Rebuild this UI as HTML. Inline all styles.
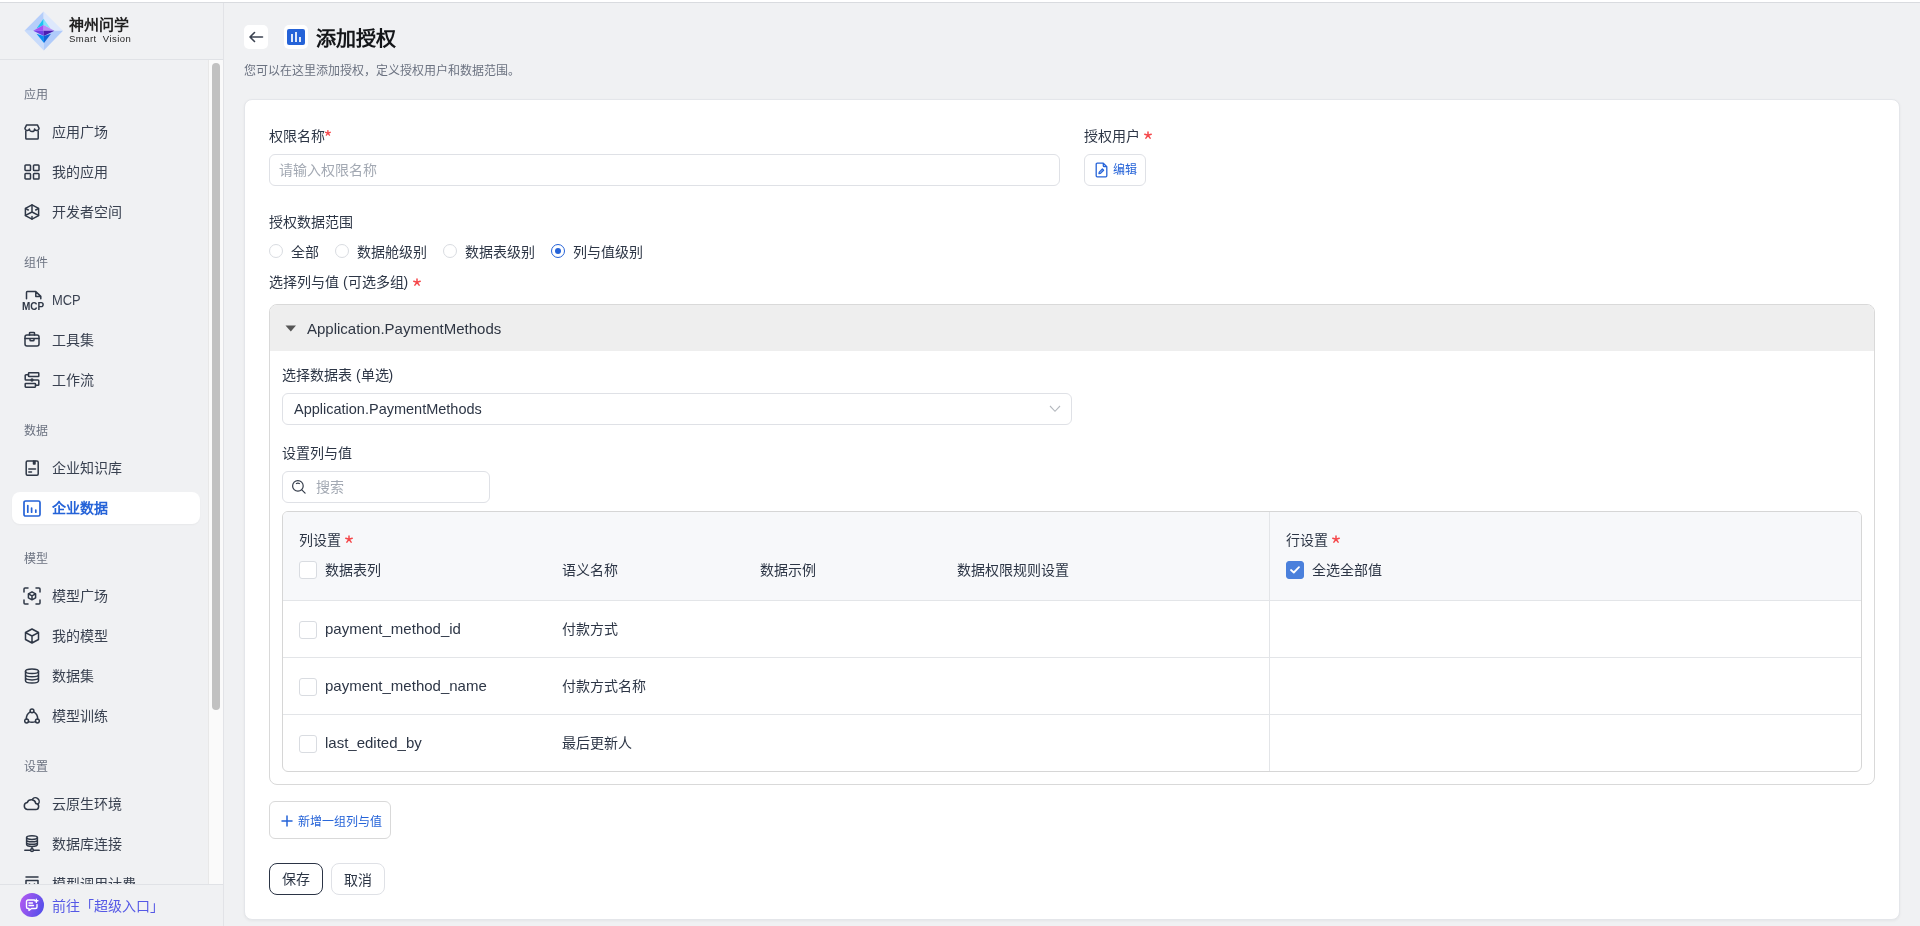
<!DOCTYPE html>
<html lang="zh-CN"><head><meta charset="utf-8">
<style>
*{box-sizing:border-box;margin:0;padding:0}
html,body{width:1920px;height:926px;overflow:hidden}
#root{position:absolute;left:0;top:0;width:1920px;height:926px;overflow:hidden;will-change:transform;background:#f0f1f3}
body{font-family:"Liberation Sans",sans-serif;background:#f0f1f3;color:#2d3646;position:relative;font-size:14px}
.topline{position:absolute;left:0;top:0;width:1920px;height:3px;background:#fff;border-bottom:1px solid #d9dbdf;z-index:5}
.sidebar{position:absolute;left:0;top:0;width:224px;height:926px;background:#f0f1f3;border-right:1px solid #e2e3e7}
.logo{position:absolute;left:0;top:0;width:223px;height:60px;border-bottom:1px solid #e0e2e6}
.gem{position:absolute;left:24px;top:11px}
.brand{position:absolute;left:69px;top:16px;font-size:15px;font-weight:bold;color:#1f1f1f;line-height:18px;letter-spacing:0px}
.brand2{position:absolute;left:69px;top:34px;font-size:9.5px;color:#1f1f1f;line-height:10px;letter-spacing:0.45px}
.track{position:absolute;left:208px;top:60px;width:15px;height:825px;background:#fafafa;border-left:1px solid #e8e8e8}
.thumb{position:absolute;left:3px;top:3px;width:8px;height:647px;background:#c1c1c1;border-radius:4px}
.sec{position:absolute;left:24px;font-size:12px;color:#6b7280;line-height:20px}
.item{position:absolute;left:12px;width:188px;height:32px;border-radius:8px;font-size:14px;color:#394150;line-height:32px}
.item .ic{position:absolute;left:12px;top:8px;width:16px;height:16px}
.item .ic svg{position:absolute;left:0;top:0}
.item .ic-mcp svg{left:-3px;top:-2px}
.item .ic-data svg{left:-1px;top:0px}
.item .ic-mplaza svg{left:-1px;top:-1px}
.item .ic-cloud svg{left:-1px;top:0}
.item .ic-dbconn svg{left:0;top:-1px}
.item .ic-tool svg{top:-1px}
.item .tx{position:absolute;left:40px;top:0}
.item.active{background:#fff;color:#2563d8;font-weight:bold;box-shadow:0 1px 2px rgba(0,0,0,0.04)}
.bottom{position:absolute;left:0;top:884px;width:223px;height:42px;border-top:1px solid #e0e2e6;background:#f0f1f3}
.sup{position:absolute;left:20px;top:8px;width:24px;height:24px;border-radius:12px;background:linear-gradient(110deg,#b85af2,#4a4ee9)}
.sup svg{position:absolute;left:5px;top:5px}
.suptx{position:absolute;left:52px;top:0;line-height:42px;font-size:14px;color:#5558e6}

.a{position:absolute}
.t14{font-size:14px;line-height:20px;white-space:nowrap}
.t12{font-size:12px;line-height:20px;white-space:nowrap}
.req{color:#f5484b}
.backbtn{position:absolute;left:244px;top:25px;width:24px;height:24px;background:#fff;border-radius:5px}
.iconbox{position:absolute;left:284px;top:25px;width:24px;height:24px;background:#fff;border-radius:5px}
.title{position:absolute;left:316px;top:25.5px;font-size:20px;line-height:26px;font-weight:bold;color:#141619}
.subtitle{position:absolute;left:244px;top:60.5px;font-size:12px;line-height:20px;color:#6b7280}
.card{position:absolute;left:244px;top:99px;width:1656px;height:821px;background:#fff;border:1px solid #e4e6ea;border-radius:8px;box-shadow:0 1px 3px rgba(0,0,0,0.05)}
.input{position:absolute;border:1px solid #dfe1e6;border-radius:6px;background:#fff}
.ph{color:#a3a9b3}
.btn{position:absolute;border:1px solid #dfe1e6;border-radius:6px;background:#fff}
.radio{position:absolute;width:14px;height:14px;border:1px solid #d9dce1;border-radius:50%;background:#fff}
.radio.on{border-color:#2563d8}
.radio.on::after{content:"";position:absolute;left:3px;top:3px;width:6px;height:6px;border-radius:50%;background:#2563d8}
.panel{position:absolute;left:269px;top:304px;width:1606px;height:481px;border:1px solid #d9d9d9;border-radius:8px;overflow:hidden;background:#fff}
.panelhead{position:absolute;left:0;top:0;width:100%;height:46px;background:#eeeeee}
.tbl{position:absolute;left:282px;top:511px;width:1580px;height:261px;border:1px solid #d6d6d6;border-radius:6px;overflow:hidden;background:#fff}
.thead{position:absolute;left:0;top:0;width:100%;height:89px;background:#f7f8fa;border-bottom:1px solid #e3e5e8}
.row{position:absolute;left:0;width:100%;height:57px;border-bottom:1px solid #e3e5e8}
.vdiv{position:absolute;left:986px;top:0;width:1px;height:100%;background:#e3e5e8}
.cb{position:absolute;width:18px;height:18px;border:1px solid #d9dce1;border-radius:3px;background:#fff}
.cb.on{background:#4a80dc;border-color:#4a80dc}

.lat{font-size:15px}
.mcpt{display:inline-block;font-size:15px;transform:scaleX(0.86);transform-origin:0 50%}

</style></head><body>
<div id="root">
<div class="topline"></div>
<div class="sidebar">
<div class="logo">
<svg class="gem" width="40" height="40" viewBox="0 0 40 40">
<polygon points="0.5,19.8 19.6,0.5 19.6,19.8" fill="#b5cefa"/>
<polygon points="19.6,0.5 39,19.8 19.6,19.8" fill="#dde8fc"/>
<polygon points="0.5,19.8 19.6,19.8 19.8,39.5" fill="#c8dbfb"/>
<polygon points="19.6,19.8 39,19.8 19.8,39.5" fill="#b0cbfa"/>
<polygon points="19.6,7.8 19.6,14 12.5,17.5" fill="#1cc4f2"/>
<polygon points="19.6,7.8 26.5,17.5 19.6,14" fill="#82e3fa"/>
<polygon points="9.3,19.8 19.6,14 19.6,19.8" fill="#a64ff6"/>
<polygon points="19.6,14 30.4,19.8 19.6,19.8" fill="#b98cf6"/>
<polygon points="9.3,19.8 19.6,19.8 19.8,25" fill="#7040e6"/>
<polygon points="19.6,19.8 30.4,19.8 19.8,25" fill="#4a1eb0"/>
<polygon points="12.5,22.8 19.8,25 20,32" fill="#0a8ef0"/>
<polygon points="19.8,25 27,22.8 20,32" fill="#1162d6"/>
</svg>
<div class="brand">神州问学</div>
<div class="brand2">Smart&nbsp;&nbsp;Vision</div>
</div>
<div class="track"><div class="thumb"></div></div>
<div class="sec" style="top:84.5px">应用</div>
<div class="item" style="top:115.5px"><span class="ic ic-store"><svg width="16" height="16" viewBox="0 0 16 16" fill="none" stroke="#2e3746" stroke-width="1.5" stroke-linecap="round" stroke-linejoin="round"><path d="M1.8,7 V14.2 a0.8,0.8 0 0 0 0.8,0.8 H13.4 a0.8,0.8 0 0 0 0.8,-0.8 V7"/><path d="M2.6,0.9 H13.4 L15.1,4.3 A2.3,2.3 0 0 1 10.6,4.9 A2.6,2.6 0 0 1 5.4,4.9 A2.3,2.3 0 0 1 0.9,4.3 Z"/></svg></span><span class="tx">应用广场</span></div>
<div class="item" style="top:155.5px"><span class="ic ic-grid"><svg width="16" height="16" viewBox="0 0 16 16" fill="none" stroke="#2e3746" stroke-width="1.5" stroke-linecap="round" stroke-linejoin="round"><rect x="1" y="1" width="5.5" height="5.5" rx="0.8"/><rect x="9.5" y="1" width="5.5" height="5.5" rx="0.8"/><rect x="1" y="9.5" width="5.5" height="5.5" rx="0.8"/><rect x="9.5" y="9.5" width="5.5" height="5.5" rx="0.8"/></svg></span><span class="tx">我的应用</span></div>
<div class="item" style="top:195.5px"><span class="ic ic-dev"><svg width="16" height="16" viewBox="0 0 16 16" fill="none" stroke="#2e3746" stroke-width="1.5" stroke-linecap="round" stroke-linejoin="round"><path d="M8,0.8 L14.6,4.4 V11.6 L8,15.2 L1.4,11.6 V4.4 Z"/><path d="M8,1 V8.2 M1.5,11.4 L8,8 L14.5,11.4 M8,12.5 V15 M1.8,4.6 L4.3,6 M14.2,4.6 L11.7,6"/></svg></span><span class="tx">开发者空间</span></div>
<div class="sec" style="top:253.0px">组件</div>
<div class="item" style="top:284.0px"><span class="ic ic-mcp"><svg width="24" height="22" viewBox="0 0 24 22"><path d="M5.5,8.8 V2.4 a0.8,0.8 0 0 1 0.8,-0.8 H14.8 L19.8,6.4 V8.8 M14.8,1.6 V6.4 H19.8" fill="none" stroke="#2e3746" stroke-width="1.5" stroke-linejoin="round" stroke-linecap="round"/><text x="12" y="19.6" text-anchor="middle" font-family="Liberation Sans" font-weight="bold" font-size="10" fill="#2e3746" letter-spacing="0">MCP</text></svg></span><span class="tx"><span class="mcpt">MCP</span></span></div>
<div class="item" style="top:324.0px"><span class="ic ic-tool"><svg width="16" height="16" viewBox="0 0 16 16" fill="none" stroke="#2e3746" stroke-width="1.5" stroke-linecap="round" stroke-linejoin="round"><rect x="1" y="4" width="14" height="11" rx="2"/><path d="M5.5,4 V2.2 a0.8,0.8 0 0 1 0.8,-0.8 H9.7 a0.8,0.8 0 0 1 0.8,0.8 V4 M1,7.5 H15 M6,7.5 V9 a0.8,0.8 0 0 0 0.8,0.8 H9.2 a0.8,0.8 0 0 0 0.8,-0.8 V7.5"/></svg></span><span class="tx">工具集</span></div>
<div class="item" style="top:364.0px"><span class="ic ic-flow"><svg width="16" height="16" viewBox="0 0 16 16" fill="none" stroke="#2e3746" stroke-width="1.5" stroke-linecap="round" stroke-linejoin="round"><rect x="4.5" y="0.8" width="10.3" height="3.8" rx="0.6"/><rect x="1.2" y="11.4" width="10.3" height="3.8" rx="0.6"/><path d="M4.5,2.7 H2 a0.8,0.8 0 0 0 -0.8,0.8 V7.2 a0.8,0.8 0 0 0 0.8,0.8 H14 a0.8,0.8 0 0 1 0.8,0.8 V12.5 a0.8,0.8 0 0 1 -0.8,0.8 H11.5"/><circle cx="8" cy="8" r="0.9" fill="#2e3746"/></svg></span><span class="tx">工作流</span></div>
<div class="sec" style="top:421.0px">数据</div>
<div class="item" style="top:452.0px"><span class="ic ic-kb"><svg width="16" height="16" viewBox="0 0 16 16" fill="none" stroke="#2e3746" stroke-width="1.5" stroke-linecap="round" stroke-linejoin="round"><rect x="2.2" y="1" width="12" height="14.2" rx="1.2"/><path d="M9.5,1 V4 H11 V1 M4.8,9 H11.5 M4.8,12 H7.5"/></svg></span><span class="tx">企业知识库</span></div>
<div class="item active" style="top:492.0px"><span class="ic ic-data"><svg width="18" height="17" viewBox="0 0 18 17" fill="none" stroke="#2563d8" stroke-width="1.7" stroke-linecap="round" stroke-linejoin="round"><rect x="1" y="1" width="16" height="15" rx="1.6"/><path d="M4.8,5.5 V12.2 M8.6,8 V12.2 M12.8,10 V12.2"/></svg></span><span class="tx">企业数据</span></div>
<div class="sec" style="top:549.0px">模型</div>
<div class="item" style="top:580.0px"><span class="ic ic-mplaza"><svg width="18" height="18" viewBox="0 0 18 18" fill="none" stroke="#2e3746" stroke-width="1.5" stroke-linecap="round" stroke-linejoin="round"><path d="M1,5 V2 a1,1 0 0 1 1,-1 H5 M13,1 H16 a1,1 0 0 1 1,1 V5 M17,13 V16 a1,1 0 0 1 -1,1 H13 M5,17 H2 a1,1 0 0 1 -1,-1 V13"/><path d="M9,4.8 L12.6,6.8 V10.8 L9,12.8 L5.4,10.8 V6.8 Z M5.5,6.9 L9,8.8 L12.5,6.9 M9,8.8 V12.7"/></svg></span><span class="tx">模型广场</span></div>
<div class="item" style="top:620.0px"><span class="ic ic-cube"><svg width="16" height="16" viewBox="0 0 16 16" fill="none" stroke="#2e3746" stroke-width="1.5" stroke-linecap="round" stroke-linejoin="round"><path d="M8,1 L14.5,4.5 V11.5 L8,15 L1.5,11.5 V4.5 Z M1.6,4.6 L8,8 L14.4,4.6 M8,8 V14.9"/></svg></span><span class="tx">我的模型</span></div>
<div class="item" style="top:660.0px"><span class="ic ic-db"><svg width="16" height="16" viewBox="0 0 16 16" fill="none" stroke="#2e3746" stroke-width="1.5" stroke-linecap="round" stroke-linejoin="round"><ellipse cx="8" cy="3.2" rx="6.5" ry="2.3"/><path d="M1.5,3.2 V12.8 C1.5,14.1 4.4,15.1 8,15.1 C11.6,15.1 14.5,14.1 14.5,12.8 V3.2 M1.5,6.4 C1.5,7.7 4.4,8.7 8,8.7 C11.6,8.7 14.5,7.7 14.5,6.4 M1.5,9.6 C1.5,10.9 4.4,11.9 8,11.9 C11.6,11.9 14.5,10.9 14.5,9.6"/></svg></span><span class="tx">数据集</span></div>
<div class="item" style="top:700.0px"><span class="ic ic-train"><svg width="16" height="16" viewBox="0 0 16 16" fill="none" stroke="#2e3746" stroke-width="1.5" stroke-linecap="round" stroke-linejoin="round"><circle cx="8" cy="2.8" r="1.9"/><circle cx="2.6" cy="13" r="1.9"/><circle cx="13.4" cy="13" r="1.9"/><path d="M6.3,3.8 C3.7,5.2 2.2,8 2.4,11.1 M9.7,3.8 C12.3,5.2 13.8,8 13.6,11.1 M4.5,13.6 C6.8,14.4 9.2,14.4 11.5,13.6"/></svg></span><span class="tx">模型训练</span></div>
<div class="sec" style="top:757.0px">设置</div>
<div class="item" style="top:788.0px"><span class="ic ic-cloud"><svg width="18" height="16" viewBox="0 0 18 16" fill="none" stroke="#2e3746" stroke-width="1.5" stroke-linecap="round" stroke-linejoin="round"><path d="M4.2,13.5 H12.5 a3,3 0 0 0 0.3,-6 A4.5,4.5 0 0 0 4.2,6.6 A3.5,3.5 0 0 0 4.2,13.5 Z"/><path d="M9.5,3.2 A3.3,3.3 0 0 1 15.4,7.8"/></svg></span><span class="tx">云原生环境</span></div>
<div class="item" style="top:828.0px"><span class="ic ic-dbconn"><svg width="16" height="18" viewBox="0 0 16 18" fill="none" stroke="#2e3746" stroke-width="1.5" stroke-linecap="round" stroke-linejoin="round"><ellipse cx="8" cy="2.6" rx="5.4" ry="1.8"/><path d="M2.6,2.6 V9.6 C2.6,10.6 5,11.4 8,11.4 C11,11.4 13.4,10.6 13.4,9.6 V2.6 M2.6,5 C2.6,6 5,6.8 8,6.8 C11,6.8 13.4,6 13.4,5 M2.6,7.4 C2.6,8.4 5,9.2 8,9.2 C11,9.2 13.4,8.4 13.4,7.4 M8,11.4 V13.4 M0.8,15.2 H6.5 M9.5,15.2 H15.2"/><circle cx="8" cy="15.2" r="1.4"/></svg></span><span class="tx">数据库连接</span></div>
<div class="item" style="top:868.0px"><span class="ic ic-bill"><svg width="16" height="16" viewBox="0 0 16 16" fill="none" stroke="#2e3746" stroke-width="1.5" stroke-linecap="round" stroke-linejoin="round"><path d="M2,1 H14 M2,4.5 H14 V15 H2 Z M5.5,8 L8,10 L10.5,8"/></svg></span><span class="tx">模型调用计费</span></div>
<div class="bottom"><span class="sup"><svg width="14" height="14" viewBox="0 0 14 14" fill="none" stroke="#fff" stroke-width="1.4" stroke-linecap="round" stroke-linejoin="round"><path d="M9.5,2 H3 a1.5,1.5 0 0 0 -1.5,1.5 V9 a1.5,1.5 0 0 0 1.5,1.5 H4 V12.5 L6.5,10.5 H10.5 a1.5,1.5 0 0 0 1.5,-1.5 V6.5"/><path d="M4,5 H7.5 M4,7.5 H8.5"/><path d="M11.3,1.2 V4.4 M9.7,2.8 H12.9"/></svg></span><span class="suptx">前往「超级入口」</span></div>
</div>
<div class="backbtn"><svg width="24" height="24" viewBox="0 0 24 24" fill="none" stroke="#3b4250" stroke-width="1.6" stroke-linecap="round" stroke-linejoin="round"><path d="M18.5,12 H6 M10.5,7.5 L6,12 L10.5,16.5"/></svg></div>
<div class="iconbox"><svg width="24" height="24" viewBox="0 0 24 24"><rect x="3" y="4" width="18" height="16" rx="2" fill="#2563d8"/><rect x="7" y="9" width="2" height="8" fill="#fff" opacity="0.85"/><rect x="11" y="7" width="2" height="10" fill="#fff" opacity="0.85"/><rect x="15" y="12" width="2" height="5" fill="#fff" opacity="0.85"/></svg></div>
<div class="title">添加授权</div>
<div class="subtitle">您可以在这里添加授权，定义授权用户和数据范围。</div>
<div class="card"></div>

<div class="a t14" style="left:269px;top:126px">权限名称</div><svg class="a" style="left:325.2px;top:129.8px" width="5.8" height="5.8" viewBox="0 0 8 8" fill="none" stroke="#f5484b" stroke-width="1.9" stroke-linecap="round"><path d="M4,4.3 V0.9 M4,4.3 L7.2,3.2 M4,4.3 L6.1,7.1 M4,4.3 L1.9,7.1 M4,4.3 L0.8,3.2"/></svg>
<div class="input" style="left:269px;top:154px;width:791px;height:32px"><div class="a t14 ph" style="left:9px;top:5px">请输入权限名称</div></div>

<div class="a t14" style="left:1084px;top:126px">授权用户</div><svg class="a" style="left:1144px;top:131px" width="8" height="8" viewBox="0 0 8 8" fill="none" stroke="#f5484b" stroke-width="1.5" stroke-linecap="round"><path d="M4,4.3 V0.9 M4,4.3 L7.2,3.2 M4,4.3 L6.1,7.1 M4,4.3 L1.9,7.1 M4,4.3 L0.8,3.2"/></svg>
<div class="btn" style="left:1084px;top:154px;width:62px;height:32px">
<svg class="a" style="left:10px;top:6.5px" width="13" height="16" viewBox="0 0 13 16" fill="none" stroke="#2563d8" stroke-width="1.3" stroke-linejoin="round" stroke-linecap="round"><path d="M8.3,1.2 H2.2 a1,1 0 0 0 -1,1 V13.8 a1,1 0 0 0 1,1 H10.8 a1,1 0 0 0 1,-1 V4.7 Z M8.3,1.2 V3.7 a1,1 0 0 0 1,1 H11.8"/><path d="M4,11.6 L4.3,10.1 L7.4,7 L8.6,8.2 L5.5,11.3 Z"/></svg>
<div class="a t12" style="left:28px;top:5px;color:#2563d8">编辑</div>
</div>

<div class="a t14" style="left:269px;top:212px">授权数据范围</div>
<div class="radio" style="left:269px;top:244px"></div><div class="a t14" style="left:291px;top:242px">全部</div>
<div class="radio" style="left:335px;top:244px"></div><div class="a t14" style="left:357px;top:242px">数据舱级别</div>
<div class="radio" style="left:443px;top:244px"></div><div class="a t14" style="left:465px;top:242px">数据表级别</div>
<div class="radio on" style="left:551px;top:244px"></div><div class="a t14" style="left:573px;top:242px">列与值级别</div>

<div class="a t14" style="left:269px;top:272px">选择列与值 (可选多组)</div><svg class="a" style="left:413px;top:278px" width="8" height="8" viewBox="0 0 8 8" fill="none" stroke="#f5484b" stroke-width="1.5" stroke-linecap="round"><path d="M4,4.3 V0.9 M4,4.3 L7.2,3.2 M4,4.3 L6.1,7.1 M4,4.3 L1.9,7.1 M4,4.3 L0.8,3.2"/></svg>

<div class="panel"><div class="panelhead">
<svg class="a" style="left:15px;top:20px" width="12" height="8" viewBox="0 0 12 8"><path d="M0.5,0.5 H11 L5.8,6.5 Z" fill="#555"/></svg>
<div class="a t14 lat" style="left:37px;top:14px;color:#2f3643">Application.PaymentMethods</div>
</div></div>

<div class="a t14" style="left:282px;top:365px">选择数据表 (单选)</div>
<div class="input" style="left:282px;top:393px;width:790px;height:32px">
<div class="a t14" style="left:11px;top:5px;font-size:14.5px">Application.PaymentMethods</div>
<svg class="a" style="left:766px;top:10px" width="12" height="9" viewBox="0 0 12 9" fill="none" stroke="#b4b8be" stroke-width="1.1"><path d="M1,2 L6,7.3 L11,2"/></svg>
</div>

<div class="a t14" style="left:282px;top:443px">设置列与值</div>
<div class="input" style="left:282px;top:471px;width:208px;height:32px">
<svg class="a" style="left:9px;top:8px" width="16" height="16" viewBox="0 0 16 16" fill="none" stroke="#353d4b" stroke-width="1.2" stroke-linecap="round"><circle cx="5.9" cy="5.9" r="5.3"/><path d="M9.8,9.8 L13.1,13.1 M4.4,3.5 Q5.9,2.7 7.4,3.5"/></svg>
<div class="a t14 ph" style="left:33px;top:5px">搜索</div>
</div>

<div class="tbl">
<div class="thead"></div>
<div class="row" style="top:89px"></div>
<div class="row" style="top:146px"></div>
<div class="row" style="top:203px;border-bottom:none"></div>
<div class="vdiv"></div>
</div>

<div class="a t14" style="left:299px;top:530px">列设置</div><svg class="a" style="left:345px;top:535px" width="8" height="8" viewBox="0 0 8 8" fill="none" stroke="#f5484b" stroke-width="1.5" stroke-linecap="round"><path d="M4,4.3 V0.9 M4,4.3 L7.2,3.2 M4,4.3 L6.1,7.1 M4,4.3 L1.9,7.1 M4,4.3 L0.8,3.2"/></svg>
<div class="cb" style="left:299px;top:561px"></div><div class="a t14" style="left:325px;top:560px">数据表列</div>
<div class="a t14" style="left:562px;top:560px">语义名称</div>
<div class="a t14" style="left:760px;top:560px">数据示例</div>
<div class="a t14" style="left:957px;top:560px">数据权限规则设置</div>
<div class="a t14" style="left:1286px;top:530px">行设置</div><svg class="a" style="left:1332px;top:535px" width="8" height="8" viewBox="0 0 8 8" fill="none" stroke="#f5484b" stroke-width="1.5" stroke-linecap="round"><path d="M4,4.3 V0.9 M4,4.3 L7.2,3.2 M4,4.3 L6.1,7.1 M4,4.3 L1.9,7.1 M4,4.3 L0.8,3.2"/></svg>
<div class="cb on" style="left:1286px;top:561px"><svg class="a" style="left:2px;top:3px" width="12" height="10" viewBox="0 0 12 10" fill="none" stroke="#fff" stroke-width="1.8" stroke-linecap="round" stroke-linejoin="round"><path d="M2,5 L4.8,7.5 L10,2.2"/></svg></div>
<div class="a t14" style="left:1312px;top:560px">全选全部值</div>

<div class="cb" style="left:299px;top:621px"></div><div class="a t14 lat" style="left:325px;top:619px">payment_method_id</div><div class="a t14" style="left:562px;top:619px">付款方式</div>
<div class="cb" style="left:299px;top:678px"></div><div class="a t14 lat" style="left:325px;top:676px">payment_method_name</div><div class="a t14" style="left:562px;top:676px">付款方式名称</div>
<div class="cb" style="left:299px;top:735px"></div><div class="a t14 lat" style="left:325px;top:733px">last_edited_by</div><div class="a t14" style="left:562px;top:733px">最后更新人</div>

<div class="btn" style="left:269px;top:801px;width:122px;height:38px;border-color:#d9d9d9">
<svg class="a" style="left:11px;top:13px" width="12" height="12" viewBox="0 0 12 12" stroke="#2563d8" stroke-width="1.5" stroke-linecap="round"><path d="M6,1 V11 M1,6 H11"/></svg>
<div class="a t12" style="left:28px;top:9.5px;color:#2563d8">新增一组列与值</div>
</div>

<div class="btn" style="left:269px;top:863px;width:54px;height:32px;border:1.5px solid #2b3445;border-radius:8px"><div class="a t14" style="left:12px;top:5px">保存</div></div>
<div class="btn" style="left:331px;top:863px;width:54px;height:32px;border-radius:8px"><div class="a t14" style="left:12px;top:5.5px">取消</div></div>

</div>
</body></html>
